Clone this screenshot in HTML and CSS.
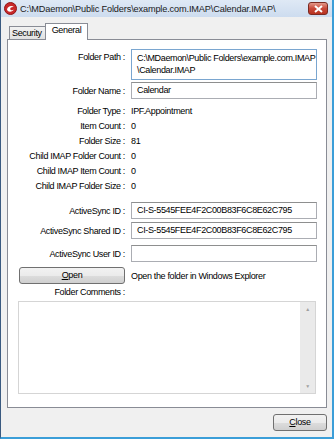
FILE: index.html
```html
<!DOCTYPE html>
<html lang="en">
<head>
<meta charset="UTF-8">
<title>Public Folder Properties</title>
<link rel="stylesheet" href="styles.css">
</head>
<body>

<div class="window">
    <div class="titlebar">
        <svg class="app-icon" width="13" height="13" viewBox="0 0 13 13">
            <circle cx="6.5" cy="6.5" r="6" fill="#c8282a" stroke="#8e1416" stroke-width="1"/>
            <path d="M3 7.5 C3.5 4 8 3 9.8 5 C8 4.6 6 5.4 6.2 7 C6.4 8.4 8.4 8.6 9.6 7.6 C9 9.8 5.2 10.4 3.6 8.8" fill="#fff"/>
        </svg>
        <span class="title">C:\MDaemon\Public Folders\example.com.IMAP\Calendar.IMAP\</span>
        <div class="close-x">
            <svg width="9" height="8" viewBox="0 0 9 8"><path d="M1 1 L8 7 M8 1 L1 7" stroke="#fff" stroke-width="2"/></svg>
        </div>
    </div>

    <div class="client">
        <div class="tabs">
            <div class="tab">Security</div>
            <div class="tab active">General</div>
        </div>

        <div class="panel">
            <div class="grid">
                <div class="label top">Folder Path :</div>
                <div class="field area">C:\MDaemon\Public Folders\example.com.IMAP<br>\Calendar.IMAP</div>

                <div class="label">Folder Name :</div>
                <div class="field">Calendar</div>
            </div>

            <div class="grid info">
                <div class="label">Folder Type :</div>
                <div class="value">IPF.Appointment</div>
                <div class="label">Item Count :</div>
                <div class="value">0</div>
                <div class="label">Folder Size :</div>
                <div class="value">81</div>
                <div class="label">Child IMAP Folder Count :</div>
                <div class="value">0</div>
                <div class="label">Child IMAP Item Count :</div>
                <div class="value">0</div>
                <div class="label">Child IMAP Folder Size :</div>
                <div class="value">0</div>
            </div>

            <div class="grid sync">
                <div class="label">ActiveSync ID :</div>
                <div class="field">CI-S-5545FEE4F2C00B83F6C8E62C795</div>
                <div class="label">ActiveSync Shared ID :</div>
                <div class="field">CI-S-5545FEE4F2C00B83F6C8E62C795</div>
                <div class="label user">ActiveSync User ID :</div>
                <div class="field user"></div>
            </div>

            <div class="grid open-row">
                <div class="button wide"><u>O</u>pen</div>
                <div class="value">Open the folder in Windows Explorer</div>
                <div class="label">Folder Comments :</div>
                <div></div>
            </div>

            <div class="comments">
                <div class="scrollbar">
                    <span class="arrow">&#9650;</span>
                    <span class="arrow">&#9660;</span>
                </div>
            </div>
        </div>

        <div class="footer">
            <div class="button close"><u>C</u>lose</div>
        </div>
    </div>
</div>

</body>
</html>
```

FILE: styles.css
```css
body {
    margin: 0;
    padding: 0;
    font-family: "Liberation Sans", Arial, sans-serif;
    font-size: 9px;
    letter-spacing: -0.35px;
    color: #000;
    background-color: #f0f0f0;
}

.window {
    width: 334px;
    height: 439px;
    box-sizing: border-box;
    border-left: 1px solid #3a5a80;
    border-right: 2px solid #3b9ed8;
    border-bottom: 2px solid #3b9ed8;
    display: flex;
    flex-direction: column;
    background-color: #f0f0f0;
}

.titlebar {
    height: 17px;
    display: flex;
    align-items: center;
    padding-left: 3px;
    background: linear-gradient(#dfe9f5, #cddcef);
    flex-shrink: 0;
}

.app-icon {
    margin-right: 3px;
    flex-shrink: 0;
}

.title {
    flex: 1;
    font-size: 9.2px;
    letter-spacing: -0.15px;
    color: #1a1a1a;
    white-space: nowrap;
    overflow: hidden;
}

.close-x {
    width: 20px;
    height: 13px;
    margin-right: 4px;
    flex-shrink: 0;
    border: 1px solid #7a2a22;
    border-radius: 3px;
    background: linear-gradient(#e3988a, #c8483a 50%, #b8321f);
    display: flex;
    align-items: center;
    justify-content: center;
    box-sizing: border-box;
}

.client {
    flex: 1;
    padding: 6px 5px 0 6px;
    display: flex;
    flex-direction: column;
}

.tabs {
    display: flex;
    align-items: flex-end;
    padding-left: 2px;
    height: 16px;
    position: relative;
    z-index: 1;
}

.tab {
    height: 12px;
    line-height: 13px;
    padding: 0 3px 0 2px;
    border: 1px solid #898c95;
    border-bottom: none;
    background: linear-gradient(#f2f2f2, #e1e1e1);
}

.tab.active {
    height: 16px;
    line-height: 13px;
    padding: 0 6px 0 6px;
    background: #fff;
    margin-left: -1px;
    margin-bottom: -1px;
}

.panel {
    height: 369px;
    box-sizing: border-box;
    border: 1px solid #898c95;
    background: #fff;
    padding: 9px 8px 0 10px;
}

.grid {
    display: grid;
    grid-template-columns: 107px 186px;
    column-gap: 6px;
    row-gap: 2px;
    align-items: center;
}

.label {
    text-align: right;
    white-space: nowrap;
}

.label.top {
    align-self: start;
    padding-top: 3px;
}

.value {
    white-space: nowrap;
}

.field {
    height: 17px;
    line-height: 15px;
    box-sizing: border-box;
    border: 1px solid #abadb3;
    border-top-color: #8e8f8f;
    padding: 0 0 0 5px;
    background: #fff;
    white-space: nowrap;
}

.field.area {
    height: 31px;
    line-height: 12px;
    padding-top: 2px;
    border-color: #7aa6d0;
}

.info {
    margin-top: 6px;
    row-gap: 3px;
}

.info .label,
.info .value {
    line-height: 12px;
}

.sync {
    margin-top: 10px;
    row-gap: 3px;
}

.label.user,
.field.user {
    margin-top: 3px;
}

.open-row {
    margin-top: 5px;
    row-gap: 3px;
}

.button {
    height: 17px;
    box-sizing: border-box;
    border: 1px solid #707070;
    border-radius: 3px;
    background: linear-gradient(#f2f2f2 0%, #ebebeb 50%, #dddddd 51%, #cfcfcf 100%);
    text-align: center;
    line-height: 15px;
}

.button.wide {
    margin-left: 1px;
}

.comments {
    margin-top: 4px;
    width: 298px;
    height: 93px;
    box-sizing: border-box;
    border: 1px solid #d5d5d5;
    display: flex;
    justify-content: flex-end;
}

.scrollbar {
    width: 15px;
    background: #eaeaea;
    display: flex;
    flex-direction: column;
    justify-content: space-between;
    align-items: center;
    padding: 4px 0;
}

.arrow {
    font-size: 5px;
    color: #a0a0a0;
}

.footer {
    display: flex;
    justify-content: flex-end;
    padding-top: 6px;
}

.button.close {
    width: 54px;
    height: 17px;
}
```
